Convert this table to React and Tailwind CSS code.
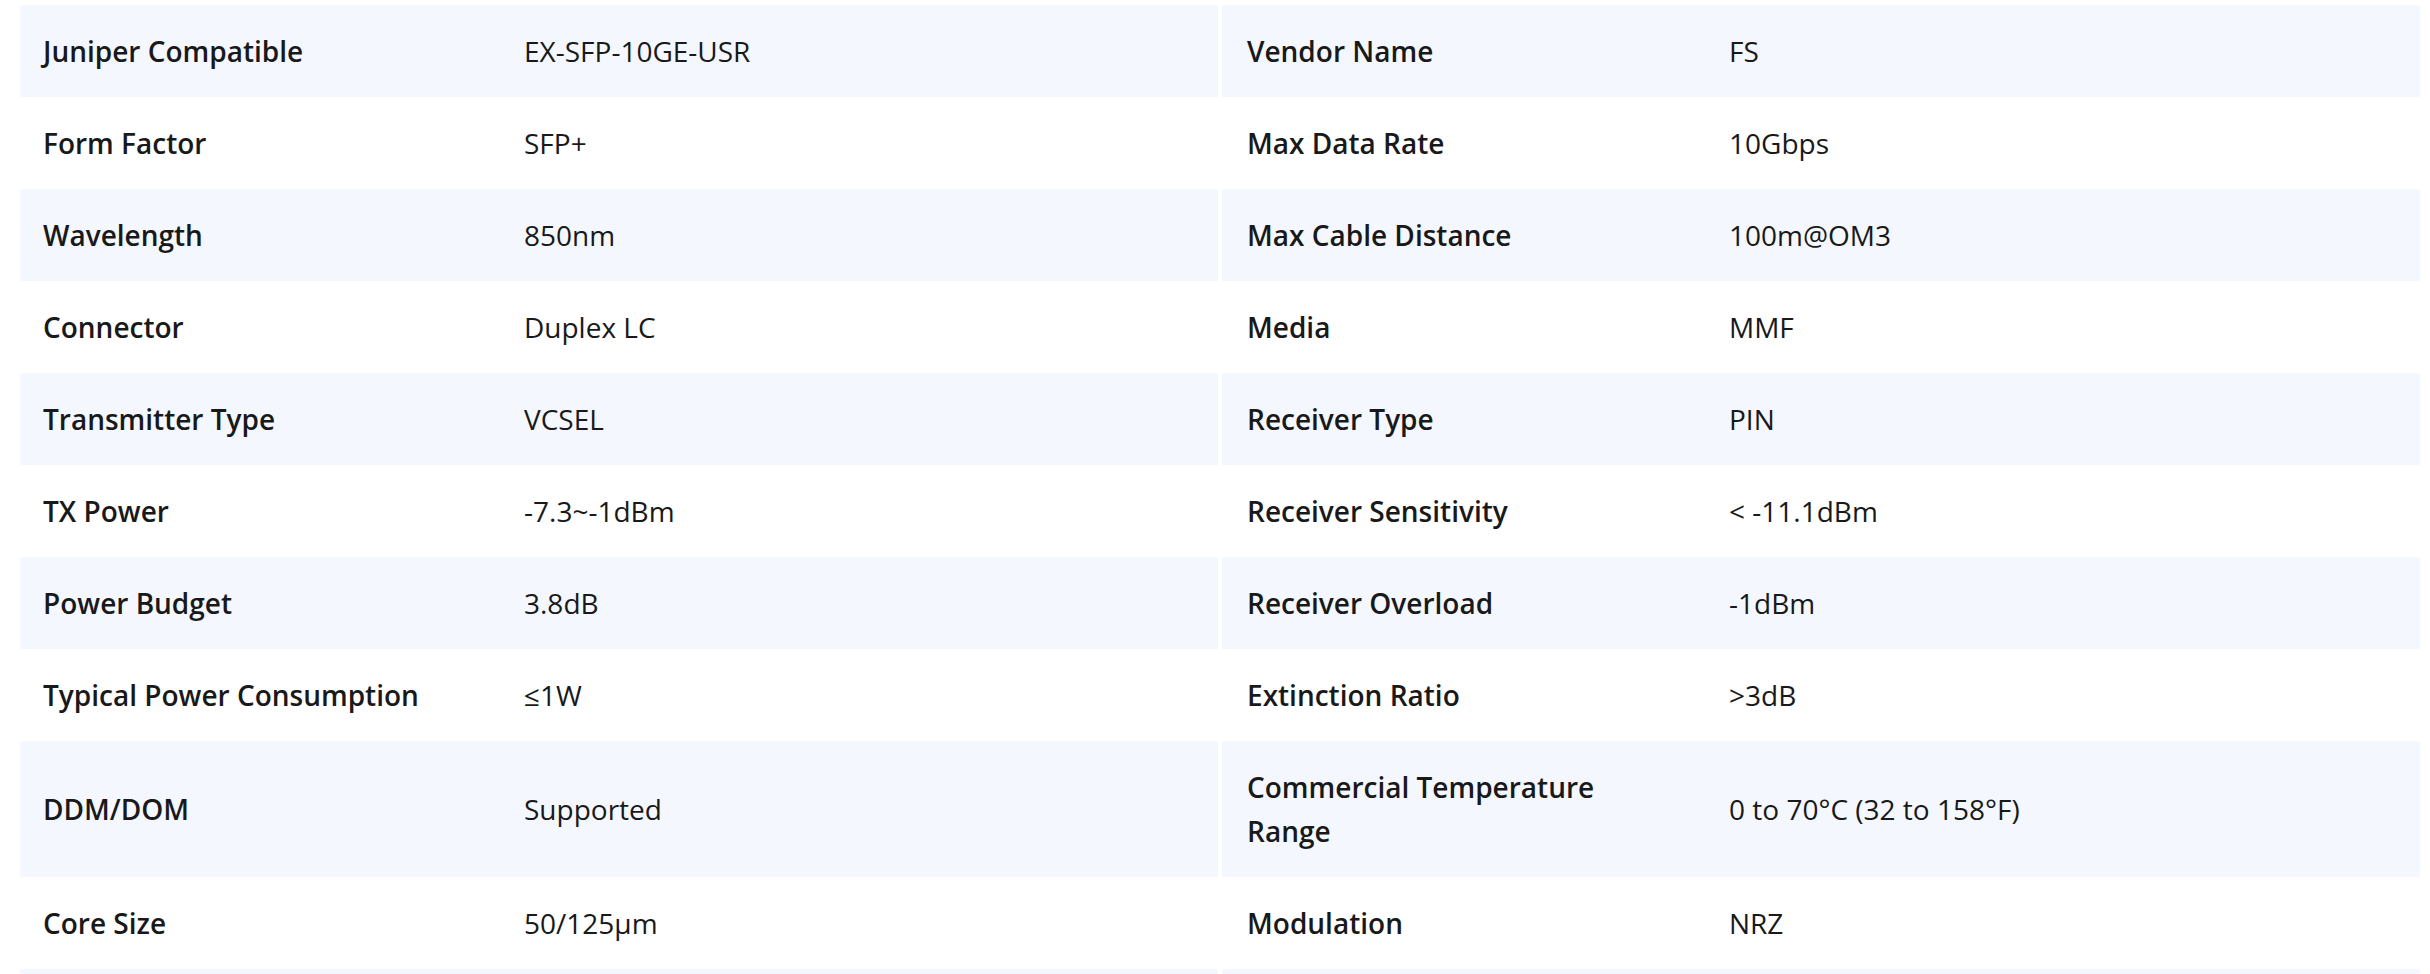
const rows = [
  [['Juniper Compatible', 'EX-SFP-10GE-USR'], ['Vendor Name', 'FS']],
  [['Form Factor', 'SFP+'], ['Max Data Rate', '10Gbps']],
  [['Wavelength', '850nm'], ['Max Cable Distance', '100m@OM3']],
  [['Connector', 'Duplex LC'], ['Media', 'MMF']],
  [['Transmitter Type', 'VCSEL'], ['Receiver Type', 'PIN']],
  [['TX Power', '-7.3~-1dBm'], ['Receiver Sensitivity', '< -11.1dBm']],
  [['Power Budget', '3.8dB'], ['Receiver Overload', '-1dBm']],
  [['Typical Power Consumption', '≤1W'], ['Extinction Ratio', '>3dB']],
  [['DDM/DOM', 'Supported'], ['Commercial Temperature Range', '0 to 70°C (32 to 158°F)']],
  [['Core Size', '50/125μm'], ['Modulation', 'NRZ']],
];

function SpecCell({ label, value, shaded, right }) {
  return (
    <div className={`flex items-center py-[24px] ${shaded ? 'bg-[#f4f8fe]' : 'bg-white'}`}>
      <div
        className={`shrink-0 font-semibold text-[#19191a] ${
          right ? 'w-[507px] pl-[25px] pr-[80px]' : 'w-[504px] pl-[23px] pr-[80px]'
        }`}
      >
        {label}
      </div>
      <div className="flex-1 pr-6 text-[#19191a]">{value}</div>
    </div>
  );
}

export default function App() {
  return (
    <div
      className="min-h-screen bg-white pt-[5px] pl-[20px] pr-[10px] text-[28px] leading-[44px]"
      style={{ fontFamily: '"Open Sans", "Noto Sans", Arial, sans-serif' }}
    >
      <div className="grid grid-cols-2 gap-x-[4px]">
        {rows.map(([l, r], i) => (
          <div key={i} className="contents">
            <SpecCell label={l[0]} value={l[1]} shaded={i % 2 === 0} />
            <SpecCell label={r[0]} value={r[1]} shaded={i % 2 === 0} right />
          </div>
        ))}
        {/* next shaded row, only its top edge shows in the frame */}
        <div className="h-[92px] bg-[#f4f8fe]" />
        <div className="h-[92px] bg-[#f4f8fe]" />
      </div>
    </div>
  );
}
